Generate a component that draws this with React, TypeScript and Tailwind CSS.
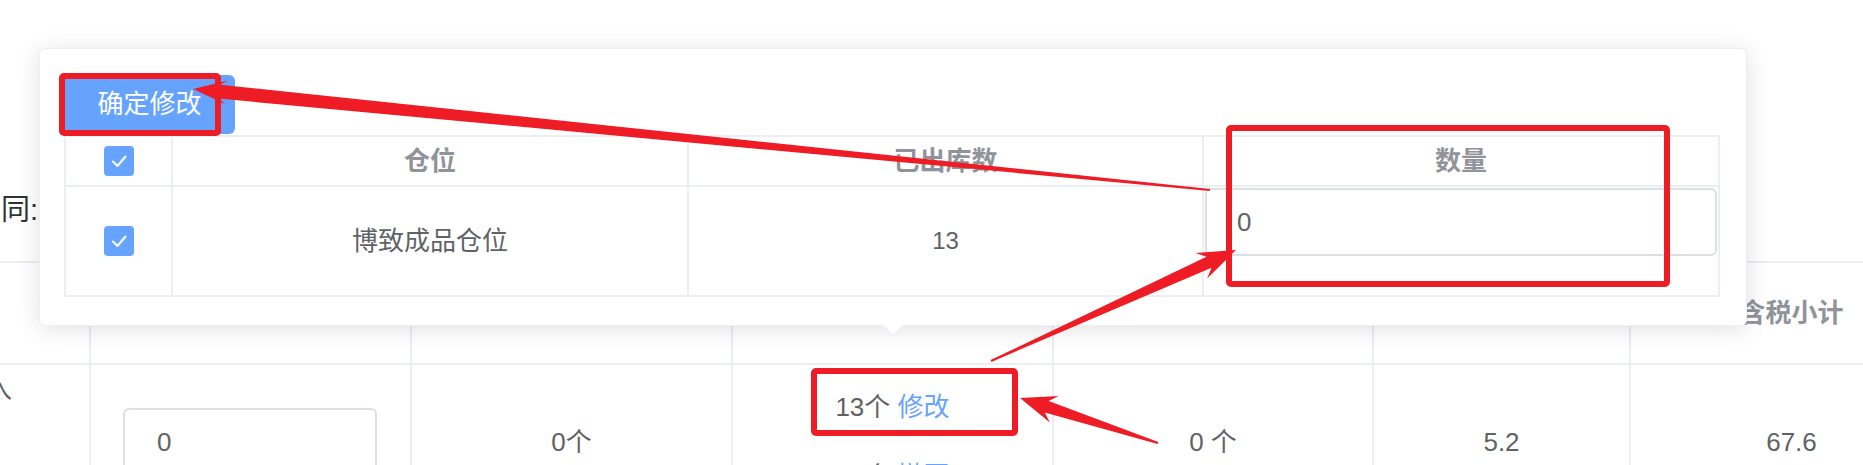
import React from "react";

const RED = "#ee1c25";

type Pt = [number, number];

// tapered annotation arrow, thin at the tail, barbed head at the tip
function arrowPoints(tail: Pt, tip: Pt, headLen: number, headHalf: number, neckHalf: number, tailHalf: number) {
  const dx = tip[0] - tail[0];
  const dy = tip[1] - tail[1];
  const len = Math.hypot(dx, dy);
  const ux = dx / len;
  const uy = dy / len;
  const px = -uy;
  const py = ux;
  const base: Pt = [tip[0] - ux * headLen, tip[1] - uy * headLen];
  const neck: Pt = [tip[0] - ux * headLen * 0.78, tip[1] - uy * headLen * 0.78];
  const pts: Pt[] = [
    tip,
    [base[0] + px * headHalf, base[1] + py * headHalf],
    [neck[0] + px * neckHalf, neck[1] + py * neckHalf],
    [tail[0] + px * tailHalf, tail[1] + py * tailHalf],
    [tail[0] - px * tailHalf, tail[1] - py * tailHalf],
    [neck[0] - px * neckHalf, neck[1] - py * neckHalf],
    [base[0] - px * headHalf, base[1] - py * headHalf],
  ];
  return pts.map((p) => `${p[0].toFixed(1)},${p[1].toFixed(1)}`).join(" ");
}

function Checkbox() {
  return (
    <span className="flex h-[30px] w-[30px] items-center justify-center rounded-[4px] bg-[#66a3ff]">
      <svg width="30" height="30" viewBox="0 0 30 30">
        <polyline points="9,15.5 13.5,20 21.5,10.5" fill="none" stroke="white" strokeWidth="2" strokeLinecap="round" strokeLinejoin="round" />
      </svg>
    </span>
  );
}

const bgCols = [
  { w: "w-[91px]", head: "" },
  { w: "w-[321px]", head: "出库数量" },
  { w: "w-[321px]", head: "已入库" },
  { w: "w-[321px]", head: "已出库" },
  { w: "w-[320px]", head: "库存" },
  { w: "w-[257px]", head: "单价" },
  { w: "w-[323px]", head: "含税小计" },
];

export default function App() {
  return (
    <div
      className="relative h-[465px] w-[1863px] overflow-hidden bg-white text-[#606266]"
      style={{ fontFamily: '"Liberation Sans", "Noto Sans CJK SC", sans-serif' }}
    >
      {/* page behind the popover */}
      <div className="h-[261px] pt-[188px]">
        <div className="-ml-[28px] text-[29px] leading-[44px] text-[#303133]">合同: 出库明细</div>
      </div>

      <div className="flex w-max border-t-2 border-[#ebeef5]">
        {bgCols.map((c) => (
          <div
            key={c.w + c.head}
            className={`${c.w} flex h-[102px] shrink-0 items-center justify-center border-r-2 border-b-2 border-[#ebeef5] text-[26px] font-bold text-[#909399]`}
          >
            {c.head}
          </div>
        ))}
      </div>

      <div className="flex w-max">
        <div className="h-[154px] w-[91px] shrink-0 overflow-hidden border-r-2 border-[#ebeef5] pt-[6px] text-[26px] leading-[36px]">
          <div className="-ml-[14px]">入</div>
        </div>
        <div className="flex h-[154px] w-[321px] shrink-0 items-center border-r-2 border-[#ebeef5] pl-[32px]">
          <div className="flex h-[68px] w-[254px] items-center rounded-[6px] border-2 border-[#dcdfe6] pl-[32px] text-[26px]">
            0
          </div>
        </div>
        <div className="flex h-[154px] w-[321px] shrink-0 items-center justify-center border-r-2 border-[#ebeef5] text-[26px]">
          0个
        </div>
        <div className="flex h-[154px] w-[321px] shrink-0 flex-col items-center justify-center gap-[34px] border-r-2 border-[#ebeef5] text-[26px] leading-[35px]">
          <div>
            13个 <span className="text-[#66a3ff]">修改</span>
          </div>
          <div>
            13个 <span className="text-[#66a3ff]">撤回</span>
          </div>
        </div>
        <div className="flex h-[154px] w-[320px] shrink-0 items-center justify-center border-r-2 border-[#ebeef5] text-[26px]">
          0 个
        </div>
        <div className="flex h-[154px] w-[257px] shrink-0 items-center justify-center border-r-2 border-[#ebeef5] text-[26px]">
          5.2
        </div>
        <div className="flex h-[154px] w-[323px] shrink-0 items-center justify-center border-r-2 border-[#ebeef5] text-[26px]">
          67.6
        </div>
      </div>

      {/* popover */}
      <div className="absolute left-[39px] top-[48px] h-[278px] w-[1708px] rounded-[6px] border border-[#ebeef5] bg-white shadow-[0_3px_24px_rgba(0,0,0,0.12)]">
        <div className="flex flex-col pl-[24px] pt-[26px]">
          <button
            type="button"
            className="-ml-[4px] h-[59px] w-[175px] rounded-[6px] bg-[#66a3ff] pl-[4px] text-[26px] text-white"
          >
            确定修改
          </button>
          <div className="mt-[1px] w-[1656px] border-l-2 border-t-2 border-[#ebeef5]">
            <div className="grid grid-cols-[107px_516px_515px_516px]">
              <div className="flex h-[50px] items-center justify-center border-r-2 border-b-2 border-[#ebeef5]">
                <Checkbox />
              </div>
              <div className="flex h-[50px] items-center justify-center border-r-2 border-b-2 border-[#ebeef5] text-[26px] font-bold text-[#909399]">
                仓位
              </div>
              <div className="flex h-[50px] items-center justify-center border-r-2 border-b-2 border-[#ebeef5] text-[26px] font-bold text-[#909399]">
                已出库数
              </div>
              <div className="flex h-[50px] items-center justify-center border-r-2 border-b-2 border-[#ebeef5] text-[26px] font-bold text-[#909399]">
                数量
              </div>

              <div className="flex h-[110px] items-center justify-center border-r-2 border-b-2 border-[#ebeef5]">
                <Checkbox />
              </div>
              <div className="flex h-[110px] items-center justify-center border-r-2 border-b-2 border-[#ebeef5] text-[26px]">
                博致成品仓位
              </div>
              <div className="flex h-[110px] items-center justify-center border-r-2 border-b-2 border-[#ebeef5] text-[24px]">
                13
              </div>
              <div className="h-[110px] border-r-2 border-b-2 border-[#ebeef5] pt-[1px] pl-[1px]">
                <div className="flex h-[68px] w-[512px] items-center rounded-[6px] border-2 border-[#dcdfe6] pl-[30px] text-[26px]">
                  0
                </div>
              </div>
            </div>
          </div>
        </div>
        <div className="absolute -bottom-[8px] left-[846px] h-[14px] w-[14px] rotate-45 border-r border-b border-[#ebeef5] bg-white" />
      </div>

      {/* red annotations */}
      <svg className="pointer-events-none absolute left-0 top-0" width="1863" height="465" viewBox="0 0 1863 465">
        <rect x="62" y="76" width="156" height="57" rx="2" fill="none" stroke={RED} strokeWidth="6" />
        <rect x="1229" y="128" width="438" height="156" rx="2" fill="none" stroke={RED} strokeWidth="6" />
        <rect x="814" y="371" width="201" height="62" rx="2" fill="none" stroke={RED} strokeWidth="6" />
        <polygon points={arrowPoints([1210, 190], [193, 89], 34, 12, 7, 1)} fill={RED} />
        <polygon points={arrowPoints([991, 361], [1236, 250], 38, 14, 6, 1)} fill={RED} />
        <polygon points={arrowPoints([1158, 443], [1020, 398], 36, 14, 6, 1)} fill={RED} />
      </svg>
    </div>
  );
}
